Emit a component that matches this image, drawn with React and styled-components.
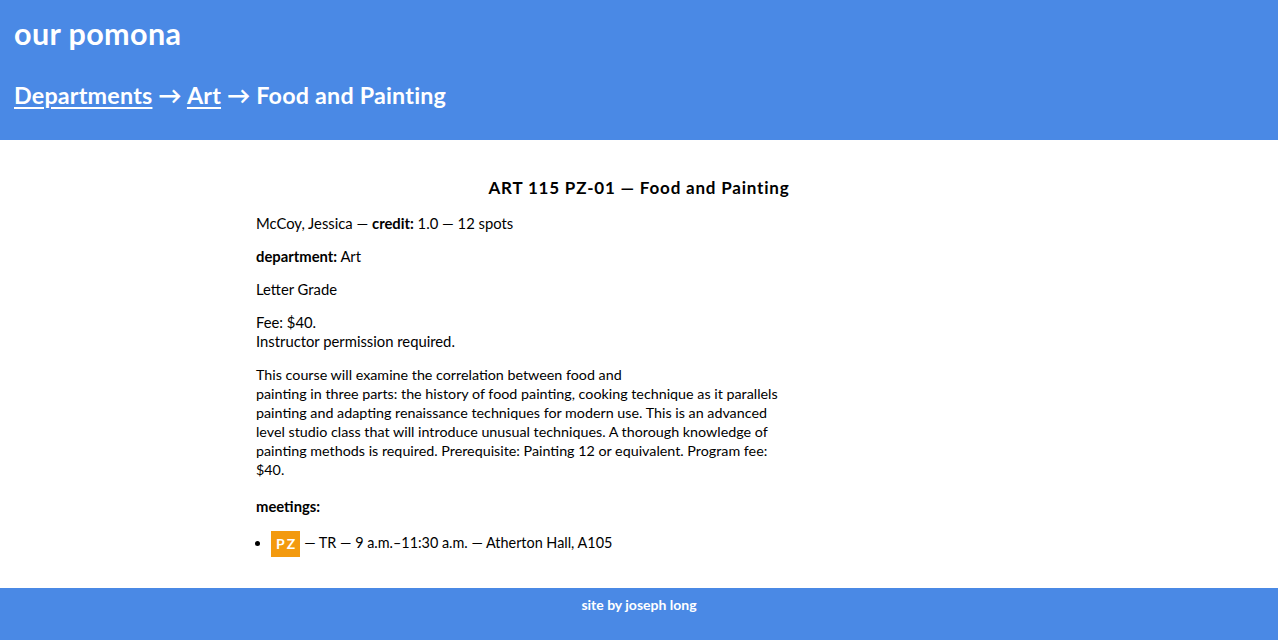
import React from "react";
import styled, { createGlobalStyle } from "styled-components";

const Global = createGlobalStyle`
  html, body { margin: 0; padding: 0; background: #ffffff; }
  body { font-family: "Lato", "Noto Sans", sans-serif; color: #000; }
`;

const BLUE = "#4a89e5";

const Header = styled.header`
  background: ${BLUE};
  color: #fff;
  padding: 13px 14px 30px;
  display: flex;
  flex-direction: column;
  gap: 27px;
`;

const SiteTitle = styled.h1`
  margin: 0;
  font-size: 30.5px;
  line-height: 40px;
  font-weight: 700;
  letter-spacing: 0.4px;
`;

const Crumbs = styled.h2`
  margin: 0;
  font-size: 23.3px;
  line-height: 30px;
  font-weight: 700;
  letter-spacing: 0.2px;
`;

const CrumbLink = styled.a`
  color: #fff;
  text-decoration: underline;
  text-underline-offset: 3px;
  text-decoration-thickness: 2px;
`;

const Main = styled.main`
  width: 766px;
  margin: 0 auto;
  padding: 37px 0 31px;
  font-size: 14.8px;
  line-height: 19px;
`;

const CourseTitle = styled.h3`
  margin: 0 0 15px;
  text-align: center;
  font-size: 17px;
  line-height: 22px;
  font-weight: 700;
  letter-spacing: 0.8px;
`;

const Para = styled.p`
  margin: ${(p) => p.$margin || "0 0 14px"};
  max-width: ${(p) => p.$max || "none"};
  font-size: ${(p) => p.$size || "inherit"};
`;

const Meetings = styled.ul`
  margin: 0;
  padding-left: 15px;
  list-style: disc;
`;

const Meeting = styled.li`
  line-height: 26px;
  font-size: 14.4px;
`;

const Badge = styled.span`
  display: inline-block;
  background: ${(p) => p.$color || "#f39a0f"};
  color: #fff;
  font-weight: 700;
  font-size: 14px;
  letter-spacing: 2px;
  height: 26px;
  line-height: 26px;
  padding: 0 3px 0 5px;
  vertical-align: middle;
  margin-right: 4px;
`;

const Footer = styled.footer`
  background: ${BLUE};
  color: #fff;
  text-align: center;
  padding: 8px 0 26px;
  font-size: 14px;
  line-height: 18px;
  font-weight: 700;
`;

const descriptionLines = [
  "This course will examine the correlation between food and",
  "painting in three parts: the history of food painting, cooking technique as it parallels",
  "painting and adapting renaissance techniques for modern use. This is an advanced",
  "level studio class that will introduce unusual techniques. A thorough knowledge of",
  "painting methods is required. Prerequisite: Painting 12 or equivalent. Program fee:",
  "$40.",
];

export default function App() {
  return (
    <>
      <Global />
      <Header>
        <SiteTitle>our pomona</SiteTitle>
        <Crumbs>
          <CrumbLink href="#">Departments</CrumbLink> → <CrumbLink href="#">Art</CrumbLink> → Food and Painting
        </Crumbs>
      </Header>
      <Main>
        <CourseTitle>ART 115 PZ-01 — Food and Painting</CourseTitle>
        <Para>
          McCoy, Jessica — <b>credit:</b> 1.0 — 12 spots
        </Para>
        <Para>
          <b>department:</b> Art
        </Para>
        <Para>Letter Grade</Para>
        <Para>
          Fee: $40.
          <br />
          Instructor permission required.
        </Para>
        <Para $max="600px" $margin="0 0 18px" $size="14.3px">
          {descriptionLines.map((line, i) => (
            <React.Fragment key={i}>
              {line}
              {i < descriptionLines.length - 1 && <br />}
            </React.Fragment>
          ))}
        </Para>
        <Para>
          <b>meetings:</b>
        </Para>
        <Meetings>
          <Meeting>
            <Badge>PZ</Badge>— TR — 9 a.m.–11:30 a.m. — Atherton Hall, A105
          </Meeting>
        </Meetings>
      </Main>
      <Footer>site by joseph long</Footer>
    </>
  );
}
